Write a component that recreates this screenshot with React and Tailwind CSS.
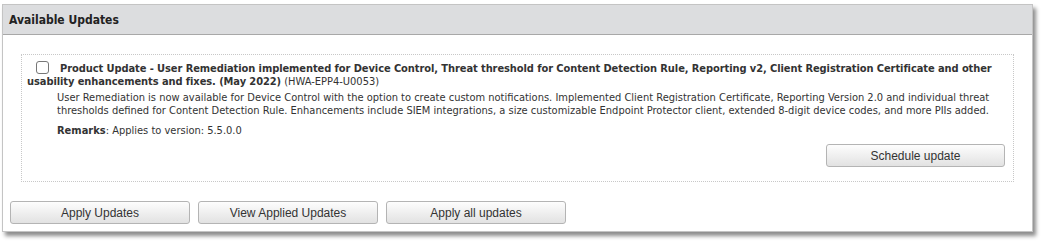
import React, { useState } from 'react';

const Button = ({ children, className = '' }) => (
    <button
        type="button"
        className={`h-[23px] rounded-[3px] border border-[#b4b4b4] bg-gradient-to-b from-[#fdfdfd] to-[#e2e2e2] font-['Liberation_Sans',Arial,sans-serif] text-[12px] text-[#333] ${className}`}
    >
        {children}
    </button>
);

const App = () => {
    const [checked, setChecked] = useState(false);

    return (
        <div className="w-[1043px] h-[243px] bg-white pt-[4px] pl-[2px] font-['DejaVu_Sans_Condensed','DejaVu_Sans',sans-serif] text-[#333]">
            <div className="w-[1031px] border border-[#c4c4c4] bg-white shadow-[3px_4px_4px_rgba(0,0,0,0.45)]">
                <div className="h-[30px] flex items-center px-[6px] bg-[#dcdddf] border-b border-[#a8a8a8] text-[12px] font-bold text-[#222]">
                    Available Updates
                </div>

                <div className="px-[18px] pt-[19px]">
                    <div className="border border-dotted border-[#c8c8c8] pb-[14px]">
                        <p className="pt-[6px] pl-[5px] text-[11px] leading-[13px]">
                            <input
                                type="checkbox"
                                checked={checked}
                                onChange={(e) => setChecked(e.target.checked)}
                                className="ml-[9px] mr-[11px] w-[13px] h-[13px] align-[-2px] appearance-none rounded-[3px] border border-[#777] bg-white"
                            />
                            <b className="font-bold tracking-[-0.08px]">
                                Product Update - User Remediation implemented for Device Control, Threat threshold for Content Detection Rule, Reporting v2, Client Registration Certificate and other usability enhancements and fixes. (May 2022)
                            </b>{' '}
                            (HWA-EPP4-U0053)
                        </p>
                        <div className="pl-[35px] pr-[20px] pt-[3px] text-[11px] leading-[13px]">
                            <p>
                                User Remediation is now available for Device Control with the option to create custom notifications. Implemented Client Registration Certificate, Reporting Version 2.0 and individual threat thresholds defined for Content Detection Rule. Enhancements include SIEM integrations, a size customizable Endpoint Protector client, extended 8-digit device codes, and more PIIs added.
                            </p>
                            <p className="mt-[7px]">
                                <b className="font-bold">Remarks</b>: Applies to version: 5.5.0.0
                            </p>
                        </div>
                        <div className="flex justify-end pr-[8px] mt-[7px]">
                            <Button className="w-[179px]">Schedule update</Button>
                        </div>
                    </div>
                </div>

                <div className="flex gap-[8px] px-[7px] pt-[19px] pb-[7px]">
                    <Button className="w-[180px]">Apply Updates</Button>
                    <Button className="w-[180px]">View Applied Updates</Button>
                    <Button className="w-[180px]">Apply all updates</Button>
                </div>
            </div>
        </div>
    );
};

export default App;
